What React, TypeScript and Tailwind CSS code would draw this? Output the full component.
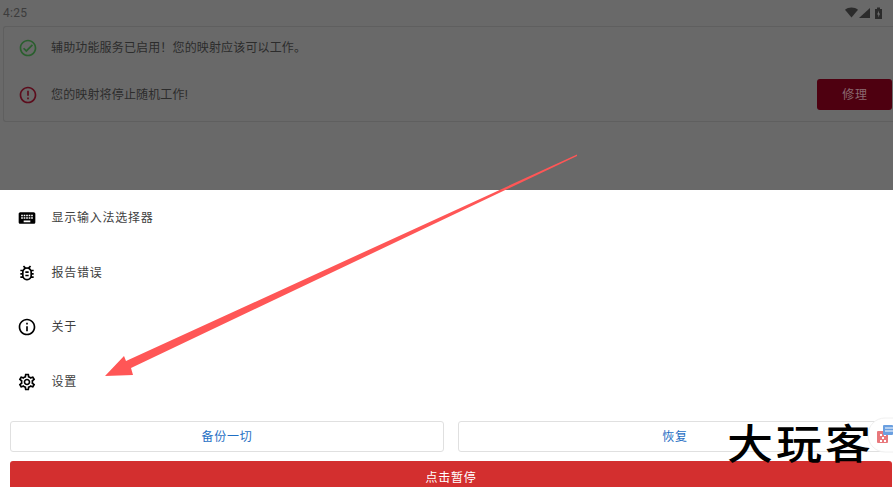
import React from "react";
import { MdKeyboard, MdOutlineBugReport, MdInfoOutline, MdOutlineSettings, MdOutlineCheckCircle, MdErrorOutline } from "react-icons/md";

const font = { fontFamily: '"Roboto","Noto Sans CJK SC",sans-serif' };

function Row({ icon, label }: { icon: React.ReactNode; label: string }) {
  return (
    <div className="flex h-[54.6px] shrink-0 items-center pl-[17px] text-[#3f3f3f]">
      <span className="flex w-[20px] justify-center text-black">{icon}</span>
      <span className="ml-[14.5px] text-[12px] tracking-[0.75px]">{label}</span>
    </div>
  );
}

export default function App() {
  return (
    <div className="relative flex h-[487px] w-[893px] flex-col overflow-hidden bg-white" style={font}>
      <div className="flex h-[190px] shrink-0 flex-col bg-[#696969]">
        <div className="flex h-[26px] shrink-0 items-center justify-between pl-[3px] pr-[11px]">
          <span className="text-[12px] tracking-[0.3px] text-[#3c3c3c]">4:25</span>
          <svg width="37" height="12" viewBox="0 0 37 12">
            <g fill="#2b2b2b">
              <path d="M0 2.8 C3.5-0.4 9.5-0.4 13 2.8 L6.5 10.5 Z" />
              <path d="M14 11 L25 1 V11 Z" />
              <path d="M30 2 H32 V0.5 H35 V2 H37 V12 H30 Z" />
            </g>
            <path d="M33.8 3.5 L32.2 7.5 H33.4 V10.5 L35 6.5 H33.8 Z" fill="#777777" />
          </svg>
        </div>
        <div className="ml-[3px] flex h-[96px] flex-col rounded-l-[3px] border border-r-0 border-[#5f5f5f]">
          <div className="flex h-[41px] items-center pl-[14px] pt-[1px]">
            <MdOutlineCheckCircle size={20} className="text-[#2a5f2e]" />
            <span className="ml-[13px] text-[12px] tracking-[0.15px] text-[#2c2c2c]">辅助功能服务已启用！您的映射应该可以工作。</span>
          </div>
          <div className="flex flex-1 items-center pl-[14px] pr-[1px]">
            <MdErrorOutline size={20} className="text-[#5c0c1c]" />
            <span className="ml-[13px] text-[12px] tracking-[0.15px] text-[#2c2c2c]">您的映射将停止随机工作!</span>
            <span className="ml-auto flex h-[31px] w-[75px] items-center justify-center rounded-[3px] bg-[#4e0010] pl-[1px] text-[12px] tracking-[0.75px] text-[#8a6a70]">修理</span>
          </div>
        </div>
      </div>
      <div className="flex flex-1 flex-col pt-[1px]">
        <Row icon={<MdKeyboard size={20} />} label="显示输入法选择器" />
        <Row icon={<MdOutlineBugReport size={20} />} label="报告错误" />
        <Row icon={<MdInfoOutline size={20} />} label="关于" />
        <Row icon={<MdOutlineSettings size={20} />} label="设置" />
        <div className="mt-[12px] flex shrink-0 gap-[14px] pl-[10px] pr-[1px]">
          <button className="h-[31px] flex-1 rounded-[3px] border border-[#e0e0e0] text-[12px] tracking-[0.75px] text-[#1f6fc4]">备份一切</button>
          <button className="h-[31px] flex-1 rounded-[3px] border border-[#e0e0e0] text-[12px] tracking-[0.75px] text-[#1f6fc4]">恢复</button>
        </div>
        <div className="ml-[10px] mr-[1px] mt-[9px] flex h-[36px] shrink-0 justify-center rounded-t-[3px] bg-[#d32f2f] pt-[8px] text-[12px] tracking-[0.75px] text-white">点击暂停</div>
      </div>

      <svg className="absolute left-0 top-0" width="893" height="487" viewBox="0 0 893 487">
        <path d="M577 154.5 L126 361 L124 356 L105 376 L133 375 L131 368 L577 156 Z" fill="#ff5656" />
        <rect x="868" y="418" width="44" height="34" rx="17" fill="#ffffff" stroke="#f0f0f0" />
        <rect x="877" y="431" width="11" height="12" rx="1" fill="#e8787c" />
        <path d="M880 434h2v2h-2zM884 434h2v2h-2zM882 437h2v2h-2zM880 440h2v2h-2zM884 440h2v2h-2z" fill="#fff" />
        <rect x="883" y="425" width="10" height="10" rx="1" fill="#6a9fe0" />
        <path d="M885 428h8M885 431h8" stroke="#fff" strokeWidth="1" />
      </svg>
      <div className="absolute left-[727px] top-[411px] origin-center scale-y-90 text-[46px] leading-[60px] tracking-[3px] text-black" style={{ fontFamily: '"Noto Sans CJK SC",sans-serif', fontWeight: 500 }}>大玩客</div>
    </div>
  );
}
